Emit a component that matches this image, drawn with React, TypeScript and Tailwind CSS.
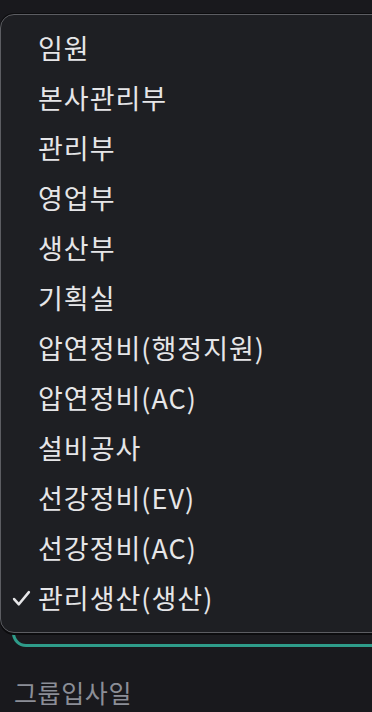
const items = [
  "임원",
  "본사관리부",
  "관리부",
  "영업부",
  "생산부",
  "기획실",
  "압연정비(행정지원)",
  "압연정비(AC)",
  "설비공사",
  "선강정비(EV)",
  "선강정비(AC)",
  "관리생산(생산)",
];

const selected = "관리생산(생산)";

const App = () => {
  return (
    <div
      className="relative h-[712px] w-full overflow-hidden bg-[#19191d]"
      style={{ fontFamily: '"Noto Sans CJK KR", "Noto Sans", sans-serif' }}
    >
      <div className="flex flex-col pl-3">
        {/* select field behind the popup */}
        <div className="-mr-[30px] mt-[560px] h-[87px] rounded-[14px] border-[3px] border-[#2e9c8a] bg-[#1b1b1f]" />
        <div className="mt-[33px] pl-[2px] text-[25px] leading-none tracking-[0.6px] text-[#8b8e97]">그룹입사일</div>
      </div>

      {/* dropdown popup */}
      <div className="absolute left-0 right-[-24px] top-[14px] rounded-[14px] border border-[#5c5d62] bg-[#1e1f23] pt-[8px] pb-[9px] shadow-[0_-1px_0_#0c0c0e,0_2px_0_#0c0c0e]">
        {items.map((item) => (
          <div
            key={item}
            className="relative flex h-[50px] items-center pl-[37px] text-[27px] tracking-[1px] text-[#e6e6e8]"
          >
            {item === selected && (
              <svg
                className="absolute left-[11px] top-[17px]"
                width="19"
                height="17"
                viewBox="0 0 18 16"
                fill="none"
                stroke="#e6e6e8"
                strokeWidth="2.4"
                strokeLinecap="round"
                strokeLinejoin="round"
              >
                <path d="M2 8.5 L6.5 13.5 L16 2" />
              </svg>
            )}
            {item}
          </div>
        ))}
      </div>
    </div>
  );
};

export default App;
